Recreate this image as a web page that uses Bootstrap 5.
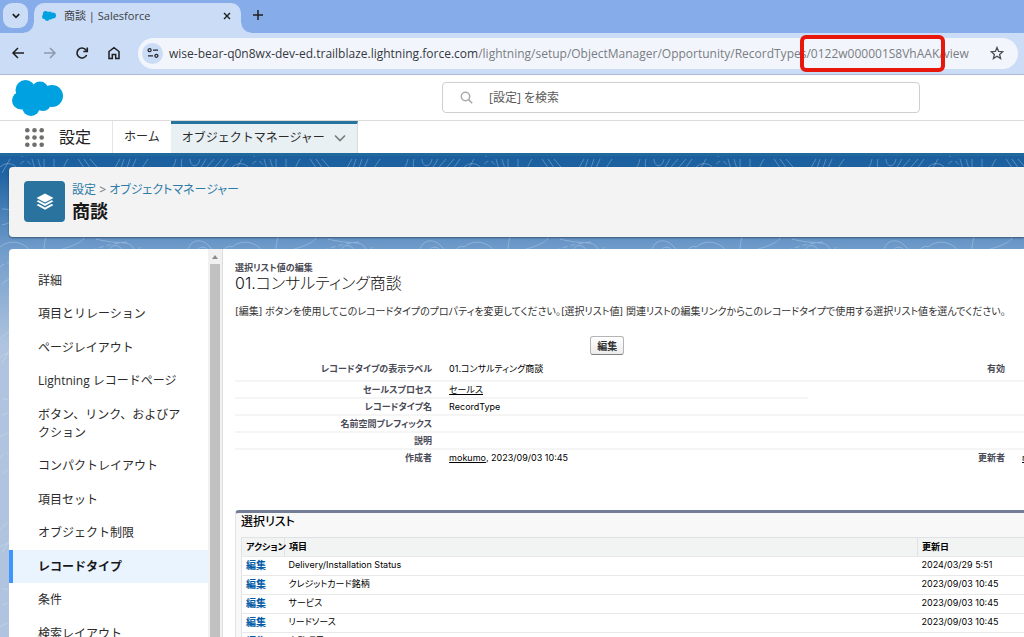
<!DOCTYPE html>
<html lang="ja">
<head>
<meta charset="utf-8">
<meta name="viewport" content="width=device-width, initial-scale=1">
<title>商談 | Salesforce</title>
<link href="https://cdn.jsdelivr.net/npm/bootstrap@5.3.0/dist/css/bootstrap.min.css" rel="stylesheet">
<style>
  body { font-family: "Open Sans", "Noto Sans CJK JP", sans-serif; font-size: 12px; line-height: 18px; color: #2b2b2b; }
  a { color: inherit; }
  svg { display: block; flex: none; }
  .min-w-0 { min-width: 0; }
  .plain-btn { background: none; border: 0; padding: 0; color: #1f1f1f; }

  /* Browser chrome */
  .tab-strip { height: 33px; background: #86ade9; }
  .tab-search { width: 25px; height: 25px; margin: 3px 6px 0 3px; border-radius: 9px; background: #cbdcf6; }
  .page-tab { width: 207px; height: 30px; margin: 3px 12px 0 0; padding: 0 10px 4px 8px; border-radius: 10px 10px 0 0; background: #cbdcf6; font-size: 11px; color: #3c4043; position: relative; }
  .page-tab::before, .page-tab::after { content: ""; position: absolute; bottom: 0; width: 10px; height: 10px; }
  .page-tab::before { left: -10px; background: radial-gradient(circle at 0 0, transparent 9px, #cbdcf6 10px); }
  .page-tab::after { right: -10px; background: radial-gradient(circle at 100% 0, transparent 9px, #cbdcf6 10px); }
  .toolbar { height: 42px; padding: 5px 6px 6px 11px; background: #cbdcf6; border-bottom: 1px solid #a9b9d6; }
  .nav-icons { gap: 18px; margin-right: 17px; }
  .omnibox { height: 31px; border-radius: 16px; background: #f2f6fc; padding: 0 14px 0 4px; }
  .site-info { width: 21px; height: 21px; border-radius: 50%; background: #cbdcf6; margin-right: 6px; }
  .address { font-size: 12px; color: #7a7d82; white-space: nowrap; padding-top: 2px; }
  .address b { font-weight: 400; color: #34383d; }
  .marked { position: relative; }
  .marked::after { content: ""; position: absolute; inset: -10px -6px; border: 4px solid #e8170c; border-radius: 6px; }

  /* Application header */
  .app-head { height: 46px; padding: 0 104px 0 12px; border-bottom: 1px solid #dddbda; }
  .search-box { width: 478px; height: 31px; border: 1px solid #cfcfcf; border-radius: 4px; padding-left: 17px; gap: 14px; }
  .search-box input { border: 0; outline: 0; font-size: 12px; background: none; }
  .search-box input::placeholder { color: #5a5a5a; opacity: 1; font-feature-settings: "palt"; }
  .app-nav { height: 35px; border-bottom: 3px solid #20699d; }
  .app-title { font-size: 16px; width: 113px; padding-left: 25px; gap: 15px; border-right: 1px solid #e5e5e5; color: #222; }
  .app-nav a { text-decoration: none; padding: 0 11px; }
  .app-nav a.current { background: #e8f0f3; border-top: 3px solid #2574a0; border-right: 1px solid #d5dadd; width: 187px; padding-bottom: 2px; }

  /* Canvas with contour lines */
  .canvas {
    padding: 11px 0 0 9px;
    background:
      url("data:image/svg+xml,%3Csvg xmlns='http://www.w3.org/2000/svg' width='232' height='190'%3E%3Cg fill='none' stroke='%23d5e6f7' stroke-opacity='.32'%3E%3Cpath d='M0 8c10-8 18 0 20 6M10 0l-8 14M32 0c2 8 6 14 0 22M38 0c2 8 6 14 2 22M44 0v22M54 0v20M62 20c0-9 2-14 6-20M78 0l14 20M84 0l14 20M90 0l12 14q6 6 10 0l8-14M124 0l-6 18M130 0l-6 18M136 0l-8 18M148 0l-12 18M166 16q8-6 10-16M182 0c-4 14 10 22 18 10l6-10M190 0c0 8 8 10 10 0M218 14l10-14M210 14l12-14M202 14l12-14M0 88c20-16 44 12 34 22M40 102c6-4 2-12 6-24M62 90c24-6 28-16 14-12M96 80c30 8 38-4 40 22M110 102c-6-20 12-20 16-4M142 98c14-14 24-4 28 4M190 102c-8-16 8-28 20-14s14-4 22 0M198 102c-6-12 6-20 12-8s10 4 14 8M2 125c16-16 32 6 8 20M0 180c20-20 30-8 22 8M2 50c18 0 18 12 0 16'/%3E%3Cpath stroke-dasharray='5 3' d='M16 12q10-20 18 0M84 95q20-10 44-12M140 88l-8 14M0 108q22-18 20 40'/%3E%3C/g%3E%3C/svg%3E") 0 3px / 232px 190px,
      linear-gradient(#1b5f9e 0, #1f63a3 18px, #6f9bca 92px, #b0c4df 190px);
  }
  .page-head { height: 70px; background: #f3f3f3; border-radius: 4px 0 0 4px; padding: 14px 15px; gap: 7px; box-shadow: 0 1px 2px #0006; margin-bottom: 12px; }
  .object-icon { width: 41px; height: 41px; border-radius: 4px; background: #2a739e; }
  .crumbs { color: #2d7ba8; line-height: 18px; font-feature-settings: "palt"; }
  .crumbs a { text-decoration: none; }
  .page-head h1 { font-size: 18px; line-height: 24px; font-weight: 700; color: #181818; }

  /* Sidebar */
  .setup-panel { border-radius: 4px 0 0 0; background: #fff; }
  .side-nav { width: 199px; padding-top: 15px; }
  .side-nav a { display: block; padding: 8px 25px 7px 29px; text-decoration: none; line-height: 18px; }
  .side-nav a:nth-child(even) { margin-bottom: 1px; }
  .side-nav a.current { background: #eaf4fe; font-weight: 700; padding-left: 25px; border-left: 4px solid #3f94ff; color: #181818; }
  .scroll-track { width: 15px; padding: 15px 2px 0; background: #f1f1f1; border-right: 1px solid #ddd; position: relative; }
  .scroll-track::before { content: ""; position: absolute; left: 4px; top: 6px; border: 3px solid transparent; border-top: 0; border-bottom: 4px solid #8b8b8b; }
  .scroll-thumb { background: #c1c1c1; }

  /* Record type detail */
  .detail { padding: 13px 0 0 12px; font-size: 9px; line-height: 12px; color: #000; font-family: Inter, "Noto Sans CJK JP", sans-serif; font-feature-settings: "palt"; }
  .detail-wide { min-width: 1146px; }
  .detail h2 { font-size: 9px; line-height: 12px; font-weight: 700; color: #4a4a56; margin: 0; }
  .detail h3 { font-size: 16px; line-height: 18px; font-weight: 300; margin: 0; color: #111; }
  .intro { font-size: 10px; line-height: 16px; margin: 11px 0 17px; color: #333; white-space: nowrap; }
  .edit-btn { border: 1px solid #b5b5b5; border-bottom-color: #7f7f7f; border-radius: 3px; background: linear-gradient(#fff, #ececec); width: 34px; height: 19px; padding: 0; font-size: 10px; line-height: 12px; font-weight: 700; color: #333; margin-left: 31%; }
  .fields { table-layout: fixed; margin-top: 3px; }
  .fields th, .fields td { height: 17px; padding: 0; border-bottom: 2px solid #f5f5f5; }
  .fields tr:first-child > * { height: 23px; }
  .fields tr:last-child > *, .fields .no-line { border-bottom: 0; }
  .fields th { text-align: right; color: #4a4a56; padding-right: 0; }
  .fields td { padding-left: 17px; }
  .picklists { margin-top: 44px; border-top: 3px solid #747e96; border-left: 1px solid #e3e3e3; border-radius: 4px 0 0 0; background: #f8f8f8; padding-left: 5px; }
  .picklists h4 { font-size: 12px; line-height: 18px; font-weight: 500; margin: 0; padding-bottom: 6px; }
  .picklists table { table-layout: fixed; background: #fff; border: 1px solid #e0e3e5; }
  .picklists th { background: #f2f3f3; border-left: 1px solid #e0e3e5; }
  .picklists th, .picklists td { height: 19px; padding: 0 4px; border-bottom: 1px solid #e8e8e8; white-space: nowrap; }
  .picklists td { padding-bottom: 2px; }
  .picklists td a { color: #015ba7; text-decoration: none; font-weight: 700; font-size: 10px; }
  .col-action { width: 43px; }
  .col-date { width: 463px; }
</style>
<script src="https://cdn.jsdelivr.net/npm/bootstrap@5.3.0/dist/js/bootstrap.bundle.min.js"></script>
</head>
<body class="d-flex flex-column vh-100 overflow-hidden">

<header class="flex-shrink-0">
  <div class="tab-strip d-flex">
    <button class="plain-btn tab-search d-flex align-items-center justify-content-center" aria-label="タブを検索">
      <svg width="10" height="8" viewBox="0 0 10 8" fill="none" stroke="#1f1f1f" stroke-width="1.7"><path d="M1.8 2.2 5 5.4l3.200-3.200"/></svg>
    </button>
    <div class="page-tab d-flex align-items-center">
      <svg width="14" height="10" viewBox="0 0 51 36"><use href="#cloud"/></svg>
      <span class="ms-2 flex-grow-1">商談 | Salesforce</span>
      <button class="plain-btn" aria-label="閉じる"><svg width="8" height="8" viewBox="0 0 8 8" stroke="#1f1f1f" stroke-width="1.4"><path d="m1 1 6 6M7 1 1 7"/></svg></button>
    </div>
    <button class="plain-btn pb-1" aria-label="新しいタブ"><svg width="10" height="10" viewBox="0 0 10 10" stroke="#1f1f1f" stroke-width="1.5"><path d="M5 0v10M0 5h10"/></svg></button>
  </div>
  <div class="toolbar d-flex align-items-center">
    <div class="nav-icons d-flex">
      <button class="plain-btn" aria-label="戻る"><svg width="14" height="14" viewBox="0 0 14 14" fill="none" stroke="#1f1f1f" stroke-width="1.5"><path d="M13 7H2.500M7 2 2 7l5 5"/></svg></button>
      <button class="plain-btn" aria-label="進む"><svg width="14" height="14" viewBox="0 0 14 14" fill="none" stroke="#8d99ad" stroke-width="1.500"><path d="M1 7h10.500M7 2l5 5-5 5"/></svg></button>
      <button class="plain-btn" aria-label="再読み込み"><svg width="14" height="14" viewBox="0 0 14 14" fill="none" stroke="#1f1f1f" stroke-width="1.600"><path d="M11.600 9A5 5 0 1 1 11 4l1 1"/><path d="M12.300 1.500v4H8.300"/></svg></button>
      <button class="plain-btn" aria-label="ホーム"><svg width="14" height="14" viewBox="0 0 14 14" fill="none" stroke="#1f1f1f" stroke-width="1.500"><path d="M2 5.500 7 1.700l5 3.800v7H8.700V8.500H5.300v4H2z"/></svg></button>
    </div>
    <div class="omnibox d-flex align-items-center flex-grow-1 min-w-0">
      <span class="site-info d-flex align-items-center justify-content-center"><svg width="12" height="10" viewBox="0 0 12 10" fill="none" stroke="#26292e" stroke-width="1.300"><circle cx="2.600" cy="2.200" r="1.500"/><path d="M6 2.200h5M1 7.800h5"/><circle cx="9.400" cy="7.800" r="1.500"/></svg></span>
      <span class="address flex-grow-1"><b>wise-bear-q0n8wx-dev-ed.trailblaze.lightning.force.com</b>/lightning/setup/ObjectManager/Opportunity/RecordTypes<span class="marked">/0122w000001S8VhAAK</span>/view</span>
      <button class="plain-btn" aria-label="ブックマーク"><svg width="14" height="14" viewBox="0 0 14 14" fill="none" stroke="#4a4d51" stroke-width="1.300"><path d="m7 1.500 1.600 3.900 4.200.300-3.200 2.700 1 4.100L7 10.300l-3.600 2.200 1-4.100L1.200 5.700l4.200-.300z"/></svg></button>
    </div>
  </div>

  <div class="app-head d-flex align-items-center justify-content-between">
    <svg width="51" height="36" viewBox="0 0 51 36" role="img" aria-label="Salesforce">
      <g id="cloud" fill="#00a1e0"><circle cx="13.500" cy="10" r="10"/><circle cx="28" cy="10" r="8.500"/><circle cx="40" cy="16" r="11"/><circle cx="9" cy="20.500" r="9"/><circle cx="19" cy="27" r="9"/><circle cx="31" cy="23" r="8"/><path d="M10 8h25v18H10z"/></g>
    </svg>
    <label class="search-box d-flex align-items-center">
      <svg width="13" height="13" viewBox="0 0 13 13" fill="none" stroke="#aaa" stroke-width="1.500"><circle cx="5.500" cy="5.500" r="4.200"/><path d="m8.600 8.600 3.600 3.600"/></svg>
      <input class="flex-grow-1" type="search" placeholder="[設定] を検索" aria-label="[設定] を検索">
    </label>
  </div>
  <nav class="app-nav d-flex">
    <div class="app-title d-flex align-items-center">
      <svg width="19" height="19" viewBox="0 0 19 19" fill="#706e6b"><g id="dots"><circle cx="2.300" cy="2.300" r="2.300"/><circle cx="9.500" cy="2.300" r="2.300"/><circle cx="16.700" cy="2.300" r="2.300"/></g><use href="#dots" y="7.200"/><use href="#dots" y="14.400"/></svg>
      <span>設定</span>
    </div>
    <a href="#" class="d-flex align-items-center">ホーム</a>
    <a href="#" class="current d-flex align-items-center justify-content-between">オブジェクトマネージャー
      <svg width="12" height="8" viewBox="0 0 12 8" fill="none" stroke="#7a7a7a" stroke-width="1.600"><path d="m1 1.500 5 5 5-5"/></svg></a>
  </nav>
</header>

<main class="canvas flex-grow-1 d-flex flex-column overflow-hidden">
  <div class="page-head d-flex flex-shrink-0">
    <div class="object-icon d-flex align-items-center justify-content-center">
      <svg width="18" height="18" viewBox="0 0 18 18" fill="#fff"><path d="M9 .500 17.500 5 9 9.500.500 5z"/><path d="M.500 8.300 2.500 7.300 9 10.800l6.500-3.500 2 1L9 13z"/><path d="m.500 12 2-1L9 14.500l6.500-3.500 2 1L9 16.800z"/></svg>
    </div>
    <div>
      <div class="crumbs"><a href="#">設定</a> <span class="text-secondary">&gt;</span> <a href="#">オブジェクトマネージャー</a></div>
      <h1 class="m-0">商談</h1>
    </div>
  </div>

  <div class="setup-panel d-flex flex-grow-1 overflow-hidden">
    <nav class="side-nav flex-shrink-0">
      <a href="#">詳細</a>
      <a href="#">項目とリレーション</a>
      <a href="#">ページレイアウト</a>
      <a href="#">Lightning レコードページ</a>
      <a href="#">ボタン、リンク、およびアクション</a>
      <a href="#">コンパクトレイアウト</a>
      <a href="#">項目セット</a>
      <a href="#">オブジェクト制限</a>
      <a href="#" class="current">レコードタイプ</a>
      <a href="#">条件</a>
      <a href="#">検索レイアウト</a>
    </nav>
    <div class="scroll-track flex-shrink-0 d-flex"><div class="scroll-thumb flex-grow-1"></div></div>
    <section class="detail flex-grow-1 overflow-hidden">
      <div class="detail-wide">
        <h2>選択リスト値の編集</h2>
        <h3>01.コンサルティング商談</h3>
        <p class="intro">[編集] ボタンを使用してこのレコードタイプのプロパティを変更してください。[選択リスト値] 関連リストの編集リンクからこのレコードタイプで使用する選択リスト値を選んでください。</p>
        <button class="edit-btn d-block">編集</button>
        <table class="fields w-100">
          <colgroup><col style="width:17.2%"><col style="width:32.8%"><col style="width:17.2%"><col style="width:32.8%"></colgroup>
          <tr><th>レコードタイプの表示ラベル</th><td>01.コンサルティング商談</td><th>有効</th><td></td></tr>
          <tr><th>セールスプロセス</th><td><a href="#">セールス</a></td><th class="no-line"></th><td class="no-line"></td></tr>
          <tr><th>レコードタイプ名</th><td>RecordType</td><th></th><td></td></tr>
          <tr><th>名前空間プレフィックス</th><td></td><th></th><td></td></tr>
          <tr><th>説明</th><td></td><th></th><td></td></tr>
          <tr><th>作成者</th><td><a href="#">mokumo</a>, 2023/09/03 10:45</td><th>更新者</th><td><a href="#">mokumo</a></td></tr>
        </table>
        <div class="picklists">
          <h4>選択リスト</h4>
          <table class="w-100">
            <colgroup><col class="col-action"><col><col class="col-date"></colgroup>
            <thead><tr><th>アクション</th><th>項目</th><th>更新日</th></tr></thead>
            <tbody>
              <tr><td><a href="#">編集</a></td><td>Delivery/Installation Status</td><td>2024/03/29 5:51</td></tr>
              <tr><td><a href="#">編集</a></td><td>クレジットカード銘柄</td><td>2023/09/03 10:45</td></tr>
              <tr><td><a href="#">編集</a></td><td>サービス</td><td>2023/09/03 10:45</td></tr>
              <tr><td><a href="#">編集</a></td><td>リードソース</td><td>2023/09/03 10:45</td></tr>
              <tr><td><a href="#">編集</a></td><td>自動項目</td><td>2024/03/29 2:43</td></tr>
            </tbody>
          </table>
        </div>
      </div>
    </section>
  </div>
</main>
</body>
</html>
